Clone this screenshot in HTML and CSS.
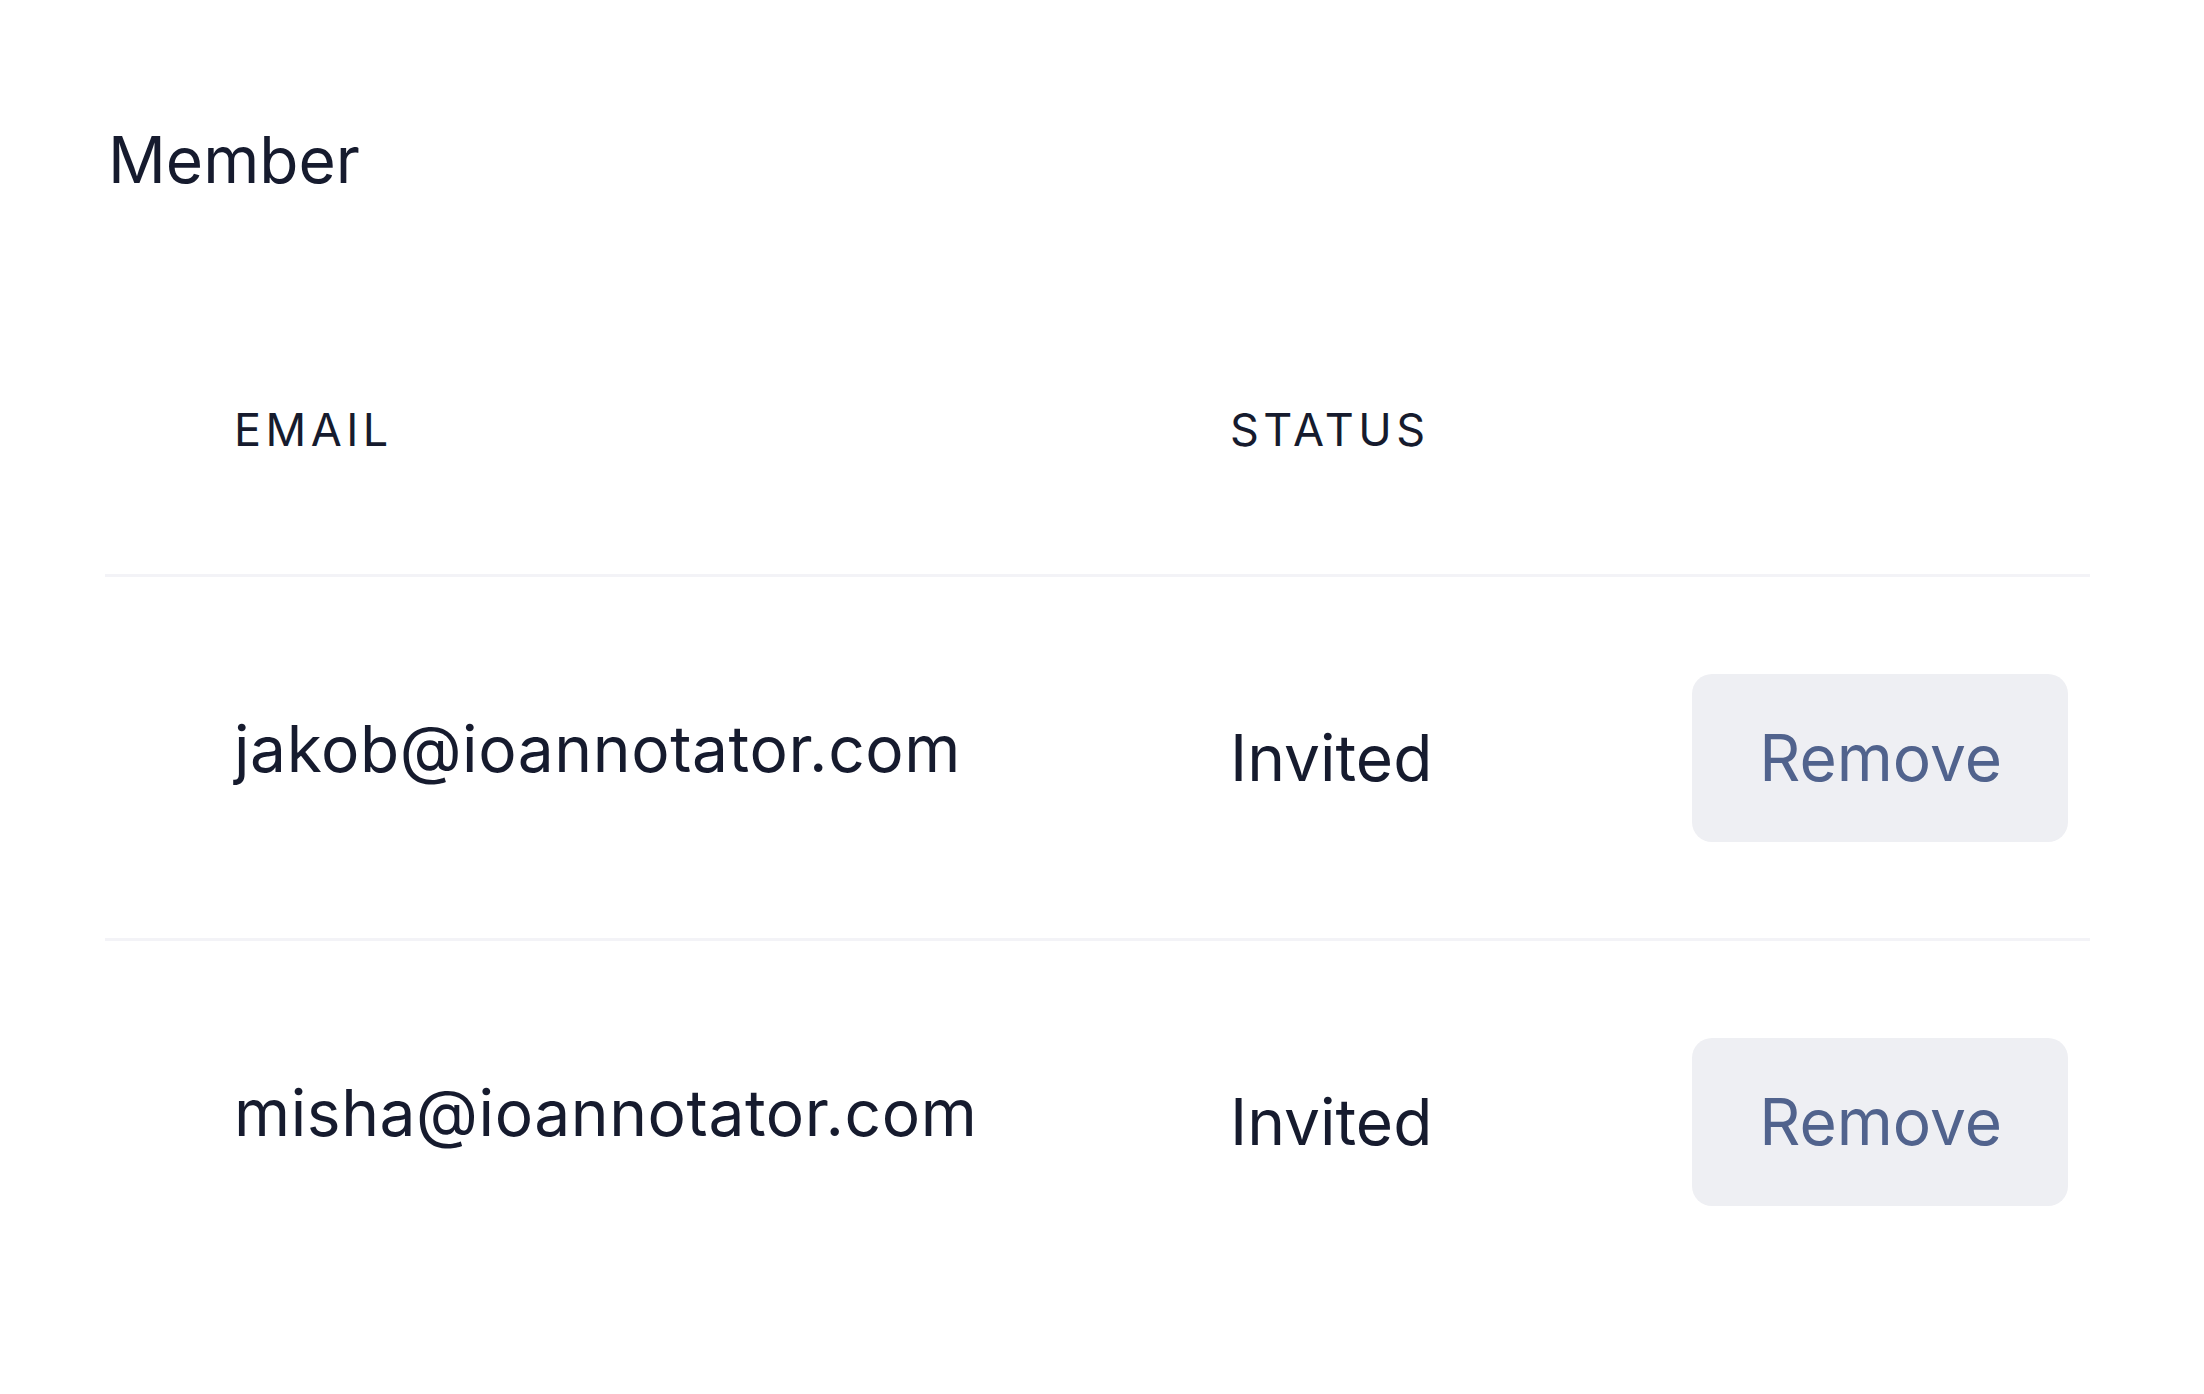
FILE: index.html
```html
<!DOCTYPE html>
<html lang="en">
<head>
<meta charset="utf-8">
<title>Member</title>
<link rel="stylesheet" href="styles.css">
</head>
<body>
<main class="page">
  <h1 class="title">Member</h1>
  <div class="table">
    <div class="row head">
      <div class="cell th">Email</div>
      <div class="cell th">Status</div>
      <div class="cell"></div>
    </div>
    <div class="row">
      <div class="cell email">jakob@ioannotator.com</div>
      <div class="cell status">Invited</div>
      <div class="cell action"><button class="btn" type="button">Remove</button></div>
    </div>
    <div class="row last">
      <div class="cell email">misha@ioannotator.com</div>
      <div class="cell status">Invited</div>
      <div class="cell action"><button class="btn" type="button">Remove</button></div>
    </div>
  </div>
</main>
</body>
</html>
```
FILE: styles.css
```css
html, body {
  margin: 0;
  padding: 0;
  background: #ffffff;
}
body {
  font-family: Inter, "Liberation Sans", sans-serif;
  color: #161b2e;
}
.page {
  padding: 121px 114px 0 105px;
}
.title {
  margin: 0;
  padding-left: 3px;
  font-size: 64px;
  line-height: 77px;
  font-weight: 400;
}
.table {
  display: flex;
  flex-direction: column;
}
.row {
  display: grid;
  grid-template-columns: 996px 1fr auto;
  align-items: center;
  padding: 0 22px 0 129px;
  height: 361px;
  border-bottom: 3px solid #f3f3f7;
}
.row.last {
  border-bottom: none;
}
.row.head {
  height: auto;
  align-items: start;
  padding-top: 205px;
  padding-bottom: 117px;
}
.th {
  font-size: 45px;
  line-height: 54px;
  font-weight: 400;
  text-transform: uppercase;
  letter-spacing: 0.1em;
}
.email, .status {
  font-size: 64px;
  line-height: 77px;
}
.email {
  padding-bottom: 18px;
  letter-spacing: 0.6px;
}
.action {
  display: flex;
  justify-content: flex-end;
}
.btn {
  font-family: inherit;
  font-size: 64px;
  line-height: 77px;
  color: #51638d;
  background: #eeeff3;
  border: none;
  border-radius: 20px;
  padding: 45px 66px 46px 67px;
  cursor: pointer;
}
```
